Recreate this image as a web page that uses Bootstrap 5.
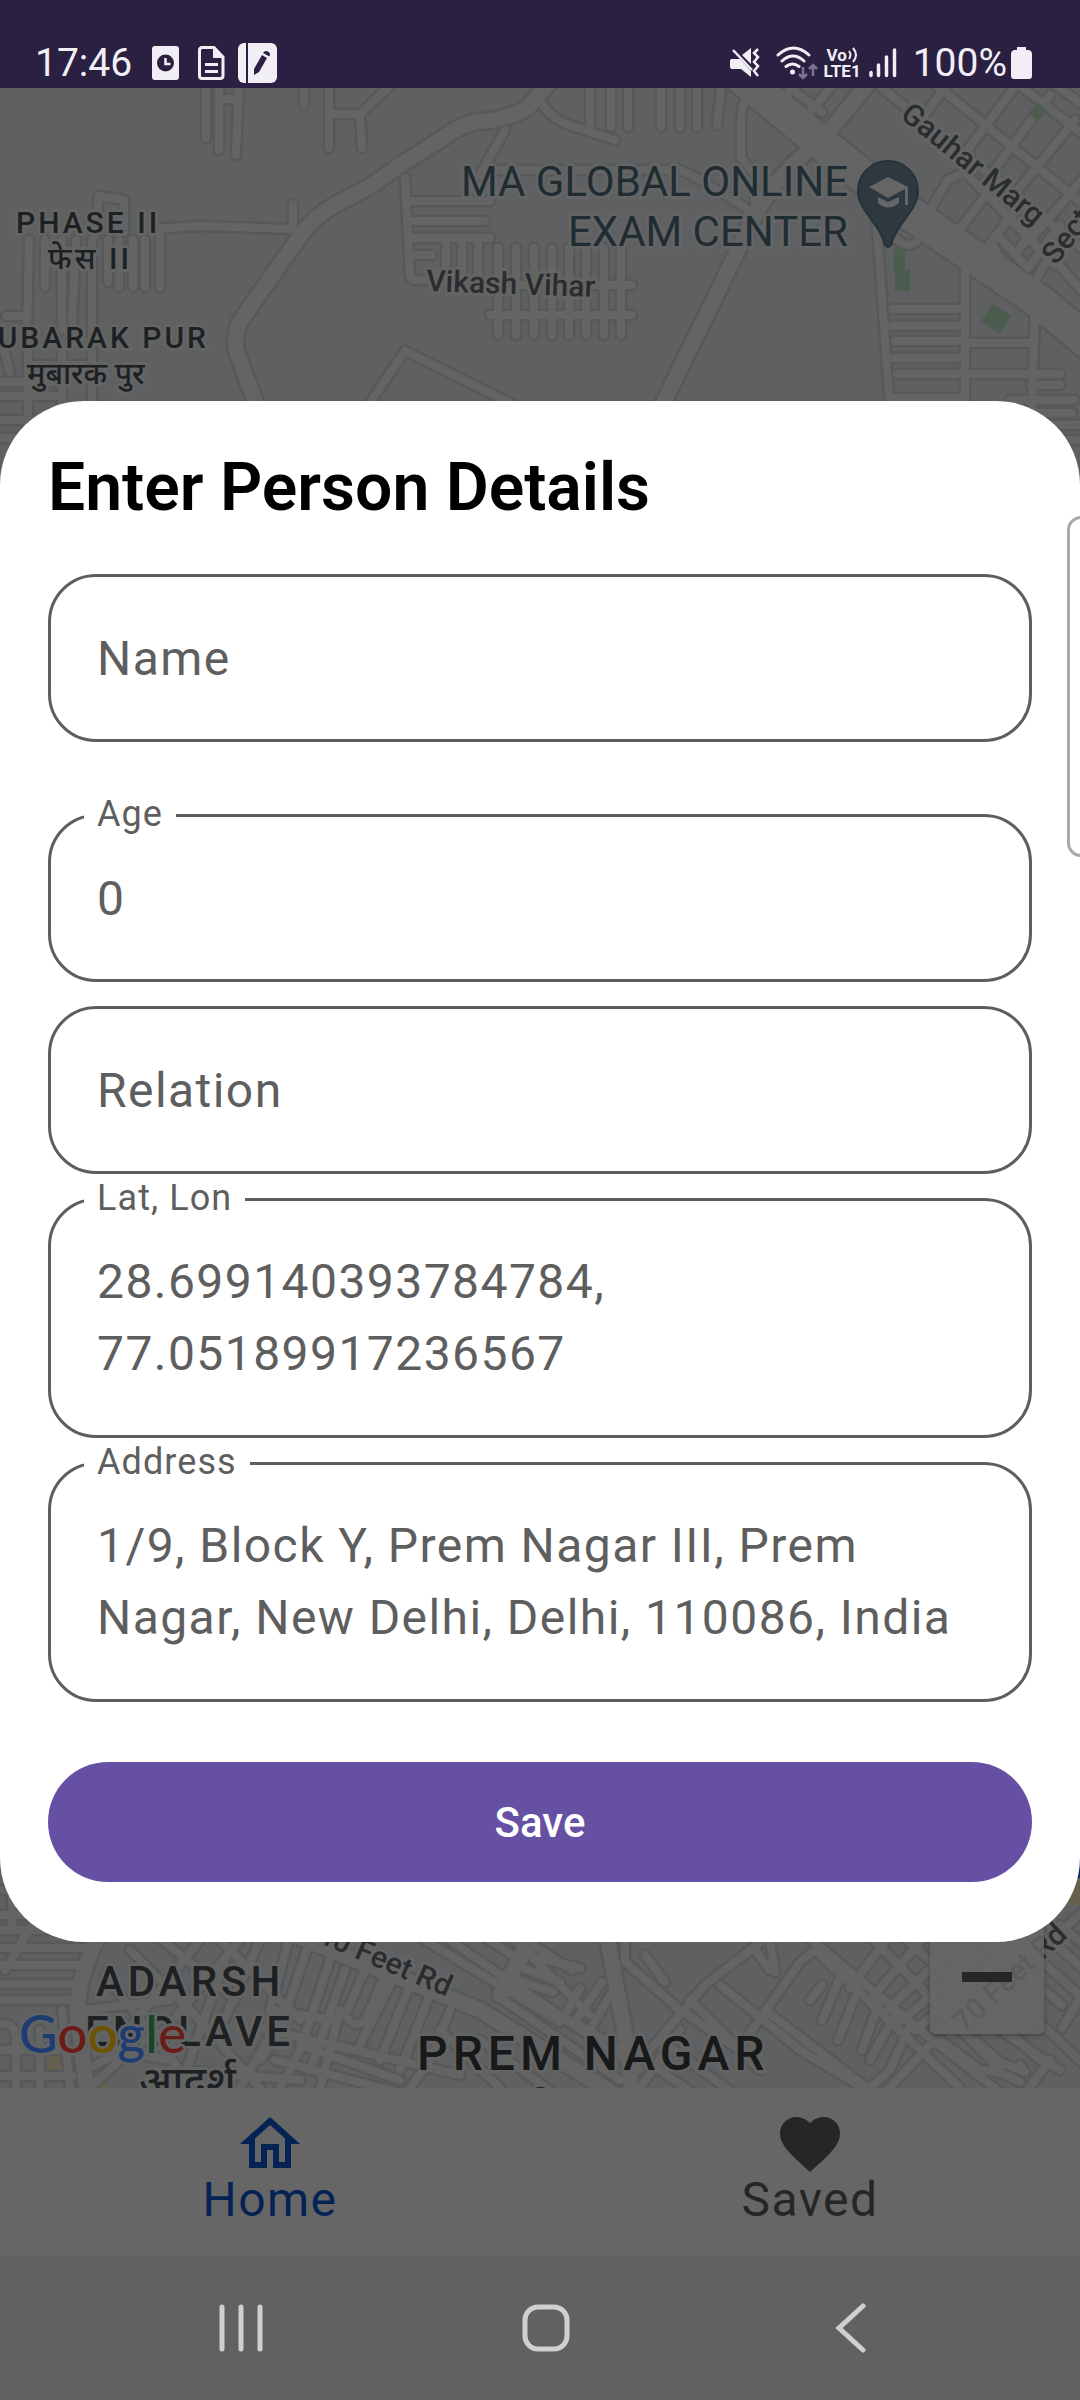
<!DOCTYPE html>
<html lang="en">
<head>
<meta charset="utf-8">
<meta name="viewport" content="width=device-width, initial-scale=1">
<title>Enter Person Details</title>
<link href="https://cdn.jsdelivr.net/npm/bootstrap@5.3.0/dist/css/bootstrap.min.css" rel="stylesheet">
<style>
  body { font-family: Roboto, "Noto Sans", sans-serif; background: #616161; }
  .status-strip { background: #2a2042; color: #f1eff5; height: 88px; padding: 38px 48px 0 35px; font-size: 39px; line-height: 50px; }
  .volte { font-size: 17px; line-height: 16px; font-weight: 700; }
  .map-area { background: #5e6062; overflow: hidden; }
  .map-canvas { position: absolute; inset: 0; width: 100%; height: 100%; }
  .road-edge { fill: none; stroke: #57585a; stroke-linejoin: round; stroke-linecap: round; }
  .road-face { fill: none; stroke: #646464; stroke-linejoin: round; stroke-linecap: round; }
  .map-label { fill: #1e2123; font-weight: 500; stroke: #636464; stroke-width: 6px; paint-order: stroke; stroke-linejoin: round; }
  .poi-label { fill: #1f2d33; font-weight: 400; font-size: 42px; }
  .area-sm { font-size: 30px; letter-spacing: 3px; }
  .area-md { font-size: 42px; letter-spacing: 4px; }
  .area-lg { font-size: 48px; letter-spacing: 5px; fill: #17191a; }
  .street { font-size: 30px; fill: #2a2c2e; }
  .wordmark { font-family: Lato, sans-serif; font-size: 53px; font-weight: 500; }
  .zoom-out { position: absolute; right: 36px; bottom: 54px; width: 114px; height: 114px; background: rgba(102,102,102,.82); border: 0; border-radius: 5px; box-shadow: 0 2px 5px rgba(0,0,0,.3); }
  .sheet { background: #fff; border-radius: 84px; margin: 313px 0 146px; padding: 48px 48px 60px; }
  .sheet-title { font-size: 66px; line-height: 77px; font-weight: 600; color: #000; margin-bottom: 48px; }
  .field { margin-bottom: 24px; }
  .field-first { margin-bottom: 72px; }
  .field-last { margin-bottom: 60px; }
  .field .form-control { display: block; border: 3px solid #5e5e5e; border-radius: 48px; padding: 45px 46px; font-size: 48px; line-height: 72px; color: #5e5e5e; letter-spacing: .03em; background: #fff; resize: none; overflow: hidden; }
  .field input.form-control { height: 168px; }
  .field textarea.form-control { height: 240px; }
  .field .form-control::placeholder { color: #5e5e5e; opacity: 1; }
  .notch { position: absolute; left: 36px; top: -24px; padding: 0 13px; background: #fff; color: #5e5e5e; font-size: 36px; line-height: 48px; letter-spacing: .03em; }
  .save-btn { height: 120px; border: 0; font-size: 42px; font-weight: 500; background: #6650a4; color: #fff; }
  .edge-handle { position: absolute; right: -24px; top: 428px; width: 37px; height: 341px; border: 3px solid #a9a9a9; border-radius: 14px; background: #fff; }
  .tabs-bar { background: #666; padding: 20px 0 36px; }
  .tab-link { font-size: 48px; line-height: 40px; letter-spacing: .03em; color: #262626; text-decoration: none; }
  .tab-link.current { color: #042253; }
  .sys-bar { background: #616161; height: 144px; padding: 0 76px 0 88px; }
  .sys-bar button { background: none; border: 0; padding: 0; line-height: 0; }
</style>
<script src="https://cdn.jsdelivr.net/npm/bootstrap@5.3.0/dist/js/bootstrap.bundle.min.js"></script>
</head>
<body class="d-flex flex-column min-vh-100 overflow-x-hidden">

<header class="status-strip d-flex align-items-center justify-content-between">
  <div class="d-flex align-items-center">
    <span>17:46</span>
    <svg class="ms-3" width="31" height="34" viewBox="-4 0 31 34"><rect width="27" height="34" rx="3" fill="#f1eff5"/><circle cx="13.500" cy="17" r="8.500" fill="#2a2042"/><path d="M13.500 12v6h5" fill="none" stroke="#f1eff5" stroke-width="2.500"/></svg>
    <svg class="ms-3" width="32" height="34" viewBox="-3 0 32 34"><path d="M4 1.500h12l9 9.500v18.500q0 3-3 3H4q-2.500 0-2.500-3V4.500q0-3 2.500-3z" fill="none" stroke="#f1eff5" stroke-width="3"/><path d="M15 1l10.500 11H15z" fill="#f1eff5"/><path d="M7 18.500h13M7 25.500h13" stroke="#f1eff5" stroke-width="3"/></svg>
    <svg class="ms-2" width="44" height="40" viewBox="-3 0 44 40"><rect width="39" height="40" rx="6" fill="#f1eff5"/><path d="M9 0v40" stroke="#2a2042" stroke-width="2"/><path d="M16 32v-6l8-14 5 3-8 14zM25 10q2-3 5-1.500 3 2 1.500 5z" fill="#2a2042"/></svg>
  </div>
  <div class="d-flex align-items-center">
    <svg class="me-3" width="30" height="31" viewBox="0 0 30 31"><path d="M1 11h6l3 0 11 12v6l-10-8H1q-1-1-1-3v-4q0-3 1-3zM12 7l9-7v16z" fill="#f1eff5"/><path d="M3 2l19 20" stroke="#f1eff5" stroke-width="2.500"/><path d="M28 1l-4 4 4 4-4 5 4 4-4 5 4 5" fill="none" stroke="#f1eff5" stroke-width="2.500"/></svg>
    <svg width="44" height="34" viewBox="2 0 44 34"><g fill="none" stroke="#f1eff5" stroke-width="3" stroke-linecap="round"><path d="M4 9q15.500-14 31 0M8 15q11-10 22 0M12 20.500q6.500-5 13 0"/></g><circle cx="18.500" cy="26" r="2.500" fill="#f1eff5"/><path d="M29 21v11M25 28l4 4 4-4M39 30V19M35 23l4-4 4 4" fill="none" stroke="#7c7590" stroke-width="2.500"/></svg>
    <div class="volte d-flex flex-column ms-1 me-2">
      <span class="d-flex align-items-center justify-content-center">Vo<svg width="11" height="16" viewBox="0 0 11 16"><path d="M2 4q3 4 0 8M6 1q6 7 0 14" fill="none" stroke="#f1eff5" stroke-width="2"/></svg></span>
      <span>LTE1</span>
    </div>
    <svg class="me-3" width="28" height="30" viewBox="0 0 28 30"><path d="M2 24.500v3M9.500 17v10.500M17.500 9v18.500M25.500 2v25.500" stroke="#f1eff5" stroke-width="3.500" stroke-linecap="round"/></svg>
    <span>100%</span>
    <svg class="ms-1" width="21" height="32" viewBox="0 0 21 32"><path d="M6 0h9v3h3q3 1 3 4v22q0 3-3 3H3q-3 0-3-3V7q0-3 3-4h3z" fill="#f1eff5"/></svg>
  </div>
</header>

<main class="map-area position-relative flex-grow-1">
  <svg class="map-canvas" viewBox="0 88 1080 2000" preserveAspectRatio="xMidYMin slice" role="img" aria-label="Map">
    <defs>
      <g id="lanes">
        <path d="M206 80V138M219 80V150M239 80L236 155M219 99H239M304 80V105M329 80V148M329 114H360L396 80M360 114L362 148"/>
        <path d="M150 229L200 226L290 229M293 204V228M95 235L99 196L124 200V232M29 240L27 330M45 240V287M62 240V330M76 240L72 325M92 240V335M108 240V282M119 240V287M133 240V287M145 240V287M160 230V287M6 316H28M4 350L10 372M0 382H60M0 396H60M62 350V430M92 350V430M28 365H90M0 420H75M0 438H50M28 350V440"/>
        <path d="M405 178L410 275Q411 281 418 280H432M408 201H490M410 221H485M410 238H490M412 255H432M446 240V275M462 240V275M478 240V275M498 248V335M516 248V335M534 248V335M552 248V335M569 248V335M586 248V335M604 248V335M621 248V335M490 285H632M490 315H632"/>
        <path d="M365 410L405 351L520 408M490 170H540H680Q700 178 756 215M505 130L480 175M590 80V125M611 80V127M628 80V127M661 80V127M680 80V127M697 80V127M722 80L717 125M752 92Q740 100 741 130V158L755 175V203M540 100Q550 120 575 127L615 140"/>
        <path d="M876 215L890 410M965 265V410M1035 310L1031 440M892 309H965M892 326H965M895 341H965M893 358H965M897 374H965M893 398H965M965 343H1032M965 374H1060M1031 385H1060M1010 400H1074M1010 413H1072M1005 425H1080M1020 440H1080M895 238Q915 255 922 230"/>
        <path d="M872 80L1090 255M930 80L1090 210M1000 70L1090 140M1035 70L1090 110M960 160L1020 80M925 115L950 80M985 182L1050 95M1010 200L1075 120M1030 240L1095 165M930 210L948 180L965 172L1055 265M955 235L990 190M985 250L1020 205M1000 258Q985 235 1000 238L1028 268M1015 255L1040 220M1028 268L1060 225M1030 290L1050 255L1090 300M780 100L800 82M812 110L835 82M790 88L822 112"/>
        <path d="M0 1890H30M0 1915H40M0 1930H65M0 1948H85M0 1965H84M0 1984H82M0 2000H78M0 2024Q16 2022 16 2040V2088M0 2050H72M0 2076H72M40 2030V2088M62 2010L70 2088M35 1920L5 1970M12 1885V1925"/>
        <path d="M130 1950L190 2010L260 2088M105 1975L180 2070M150 1930L235 2000M200 1940L120 2040M240 1940L165 2030L85 2070M205 1925L300 2020M225 1960L180 2088M260 1940L215 2040M290 2000L240 2088M85 2010L170 2000M85 2045L170 2060M170 2070L300 2080M120 2060L90 2088"/>
        <path d="M290 1935L270 2010M310 1940L280 2030L260 2060M330 1960L300 2050L280 2088M270 2010L330 2020M260 2028L460 2075M275 2060L420 2098M345 1970L310 2070M365 1970L345 2015Q360 2035 370 2010L385 1975M390 1985L360 2045M410 1985L380 2060M430 1995L400 2070M450 2010L430 2060L410 2088M340 2010L320 2088M300 2045L400 2080"/>
        <path d="M400 1925L560 2022M420 1920L640 2070M450 1915L520 1960M490 1915L590 2015M545 1925L500 1998M500 1998L620 2080M525 1955L580 1968M530 1943L572 1970M515 1965L560 1982M510 1978L553 1992M580 1988L565 2015M602 1982L575 2022M610 1995L590 2030M560 2015L640 2060M480 2040L560 2098M520 2030L600 2088M440 2030L500 2088"/>
        <path d="M625 1930L625 1962L680 2010L740 2050M645 1955L665 1982M705 1985L650 2050M705 1985L770 1935L800 1912M690 2000L760 2070M720 1985L800 2050L880 2098M745 2040L800 1962L815 1950M770 1940L775 1972M755 1950L770 1970M815 1950L960 2088M765 2010L870 2090M630 2050L700 2098M660 2040L740 2098M680 2030L640 2088"/>
        <path d="M822 1985L810 2000M840 1978L822 2020M860 1985L838 2040M880 2000L862 2050M895 2015L870 2060M910 2025L890 2070L860 2098M850 1988L905 1915M870 2000L930 1930M885 2012L950 1950M900 2022L980 1955M915 2030L1000 1960M930 2045L880 2098M800 1930L920 2030L1010 2100M850 1915L1000 2070M885 1920L1040 2060M940 2040L980 2070Q1000 2070 1020 2082M975 2040L1000 2062L1025 2072L1020 2065M1000 2030L1060 2070M1050 2060L1020 2100M1000 1985L1090 2070M1040 1960L1085 2000M1020 1970L1062 2005M1085 1990L1062 2028M1060 1925L1090 1950M1045 1935L1090 1975M1090 1905L1030 1960L960 2030"/>
      </g>
      <g id="avenues">
        <path d="M262 420L236 350Q234 335 240 322L262 290L303 232Q315 216 335 205L372 185L405 162L440 140Q465 121 485 121Q515 118 530 105L560 70"/>
        <path d="M875 75L822 140Q780 170 755 215L660 410"/>
        <path d="M105 1925Q75 1975 78 2020L88 2098"/>
        <path d="M270 1925L360 1962L480 2010L620 2098M605 1925L628 2050L632 2098M540 1920L500 1995"/>
      </g>
      <path id="highway" d="M735 72L815 138L905 210L1040 302L1100 352"/>
    </defs>
    <rect y="88" width="1080" height="2000" fill="#5e6062"/>
    <path d="M57 2015L67 2013L66 2070L46 2073L46 2055L56 2052zM88 2078L106 2070L108 2088H90zM48 1990L70 1985V1990zM88 2002L105 1998L100 2005zM1060 1905L1080 1875V1905z" fill="#66614f"/>
    <path d="M1076 1850h4v28h-4z" fill="#0b2a63"/>
    <use href="#lanes" class="road-edge" stroke-width="13"/>
    <use href="#avenues" class="road-edge" stroke-width="20"/>
    <use href="#highway" class="road-edge" stroke-width="38"/>
    <use href="#lanes" class="road-face" stroke-width="8"/>
    <use href="#avenues" class="road-face" stroke-width="15"/>
    <use href="#highway" class="road-face" stroke-width="33"/>
    <path d="M894 249h11v20h5v22h-15v-19h-1zM993 304L1011 316L1000 334L981 321zM1038 103L1047 110L1038 121L1030 114z" fill="#4c5c4f"/>

    <path d="M888 161a30 30 0 0 1 30 30c0 20-22 32-27 54q-3 4-6 0c-5-22-27-34-27-54a30 30 0 0 1 30-30z" fill="#2e383f" stroke="#263238" stroke-width="2"/>
    <path d="M869 187l19-10 20 10v18h-3v-16l-17 9zM878 197l10 5 11-5v6q-11 9-21 0z" fill="#646668"/>

    <g class="map-label">
      <text class="poi-label" x="848" y="196" text-anchor="end">MA GLOBAL ONLINE</text>
      <text class="poi-label" x="848" y="246" text-anchor="end">EXAM CENTER</text>
      <text class="area-sm" x="16" y="233">PHASE II</text>
      <text class="area-sm" x="48" y="269">फेस II</text>
      <text class="area-sm" x="209" y="348" text-anchor="end">MUBARAK PUR</text>
      <text font-size="30" x="27" y="384">मुबारक पुर</text>
      <text class="street" transform="translate(426 291) rotate(2)">Vikash Vihar</text>
      <text class="street" transform="translate(899 117) rotate(39)">Gauhar Marg</text>
      <text class="street" transform="translate(1056 266) rotate(-52)">Sector</text>
      <text class="street" transform="translate(315 1941) rotate(23)">40 Feet Rd</text>
      <text class="street" transform="translate(964 2034) rotate(-43)">70 Feet Rd</text>
      <text class="area-md" x="96" y="1996">ADARSH</text>
      <text class="area-md" x="85" y="2046">ENCLAVE</text>
      <text font-size="42" x="139" y="2096">आदर्श</text>
      <text class="area-lg" x="417" y="2070">PREM NAGAR</text>
      <text font-size="42" x="593" y="2124" text-anchor="middle">प्रेम नगर</text>
    </g>
    <text class="wordmark" x="19" y="2053" stroke="#626363" stroke-width="6" stroke-linejoin="round" paint-order="stroke"><tspan fill="#1d3c73">G</tspan><tspan fill="#6b1c17">o</tspan><tspan fill="#6e5200">o</tspan><tspan fill="#1d3c73">g</tspan><tspan fill="#17472a">l</tspan><tspan fill="#6b1c17">e</tspan></text>
  </svg>

  <button class="zoom-out d-flex align-items-center justify-content-center" type="button" aria-label="Zoom out">
    <svg width="50" height="10" viewBox="0 0 50 10"><rect width="50" height="10" fill="#262626"/></svg>
  </button>

  <form class="sheet position-relative">
    <h1 class="sheet-title">Enter Person Details</h1>
    <div class="field field-first">
      <input class="form-control" type="text" id="person-name" placeholder="Name" aria-label="Name">
    </div>
    <div class="field position-relative">
      <input class="form-control" type="text" inputmode="numeric" id="person-age" value="0">
      <label class="notch" for="person-age">Age</label>
    </div>
    <div class="field">
      <input class="form-control" type="text" id="person-relation" placeholder="Relation" aria-label="Relation">
    </div>
    <div class="field position-relative">
      <textarea class="form-control" id="person-latlon" rows="2">28.699140393784784,
77.05189917236567</textarea>
      <label class="notch" for="person-latlon">Lat, Lon</label>
    </div>
    <div class="field field-last position-relative">
      <textarea class="form-control" id="person-address" rows="2">1/9, Block Y, Prem Nagar III, Prem
Nagar, New Delhi, Delhi, 110086, India</textarea>
      <label class="notch" for="person-address">Address</label>
    </div>
    <button class="btn save-btn w-100 rounded-pill" type="submit">Save</button>
  </form>
  <div class="edge-handle"></div>
</main>

<nav class="tabs-bar row g-0 text-center">
  <a class="tab-link current col d-flex flex-column align-items-center" href="#home">
    <svg width="72" height="72" viewBox="0 0 24 24" fill="currentColor"><path d="M12 5.690l5 4.500V18h-2v-6H9v6H7v-7.810l5-4.500M12 3L2 12h3v8h6v-6h2v6h6v-8h3L12 3z"/></svg>
    <span>Home</span>
  </a>
  <a class="tab-link col d-flex flex-column align-items-center" href="#saved">
    <svg width="72" height="72" viewBox="0 0 24 24" fill="currentColor"><path d="M12 21.350l-1.450-1.320C5.400 15.360 2 12.280 2 8.500 2 5.420 4.420 3 7.500 3c1.740 0 3.410.810 4.500 2.090C13.090 3.810 14.760 3 16.500 3 19.580 3 22 5.420 22 8.500c0 3.780-3.400 6.860-8.550 11.540L12 21.350z"/></svg>
    <span>Saved</span>
  </a>
</nav>

<footer class="sys-bar d-flex align-items-center justify-content-around">
  <button type="button" aria-label="Recent apps"><svg width="50" height="50" viewBox="0 0 50 50"><path d="M6 4v42M25 4v42M44 4v42" stroke="#d0d0d0" stroke-width="5" stroke-linecap="round"/></svg></button>
  <button type="button" aria-label="Home"><svg width="50" height="50" viewBox="0 0 50 50"><rect x="4" y="4" width="42" height="42" rx="13" fill="none" stroke="#d0d0d0" stroke-width="5"/></svg></button>
  <button type="button" aria-label="Back"><svg width="50" height="50" viewBox="0 0 50 50"><path d="M37 3L13 25L37 47" fill="none" stroke="#d0d0d0" stroke-width="5" stroke-linecap="round"/></svg></button>
</footer>
</body>
</html>
